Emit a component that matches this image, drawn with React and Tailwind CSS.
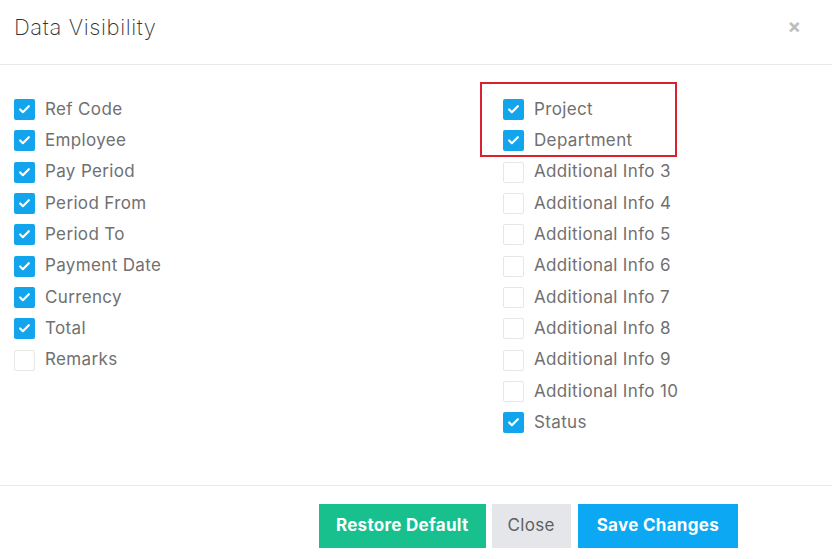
import { Check } from 'lucide-react';

const leftItems = [
    ['Ref Code', true],
    ['Employee', true],
    ['Pay Period', true],
    ['Period From', true],
    ['Period To', true],
    ['Payment Date', true],
    ['Currency', true],
    ['Total', true],
    ['Remarks', false],
];

const rightItems = [
    ['Project', true],
    ['Department', true],
    ['Additional Info 3', false],
    ['Additional Info 4', false],
    ['Additional Info 5', false],
    ['Additional Info 6', false],
    ['Additional Info 7', false],
    ['Additional Info 8', false],
    ['Additional Info 9', false],
    ['Additional Info 10', false],
    ['Status', true],
];

const Row = ({ label, checked }) => (
    <div className="flex items-center h-[31.3px]">
        {checked ? (
            <span className="w-[21px] h-[21px] rounded-[2px] bg-[#12a4ec] flex items-center justify-center">
                <Check className="w-[13px] h-[13px] text-white" strokeWidth={4} />
            </span>
        ) : (
            <span className="w-[21px] h-[21px] rounded-[2px] border border-[#e6e6e6] bg-white" />
        )}
        <span className="ml-[10px] text-[17px] tracking-[0.35px] text-[#707070]">{label}</span>
    </div>
);

export default function App() {
    return (
        <div className="w-[832px] h-[559px] bg-white relative" style={{ fontFamily: 'Inter, "Open Sans", sans-serif' }}>
            <div className="flex items-start justify-between h-[65px] border-b border-[#e9e9e9] pl-[14px] pr-[31px] pt-[13px]">
                <h1 className="text-[22px] font-extralight text-[#333] tracking-[0.6px] leading-[28px]">Data Visibility</h1>
                <span className="text-[#bdbdbd] text-[20px] font-bold leading-none mt-[3px]">×</span>
            </div>

            <div className="flex h-[420px] pt-[29px] pl-[14px]">
                <div className="w-[489px]">
                    {leftItems.map(([l, c]) => <Row key={l} label={l} checked={c} />)}
                </div>
                <div className="relative">
                    {rightItems.map(([l, c]) => <Row key={l} label={l} checked={c} />)}
                    <div className="absolute left-[-23px] top-[-12px] w-[197px] h-[75px] border-2 border-[#d8232f]" />
                </div>
            </div>

            <div className="border-t border-[#e9e9e9] flex justify-end gap-[6px] pt-[18px] pr-[94px]">
                <button className="h-[44px] px-[17px] bg-[#17c08d] text-white font-bold text-[17px] tracking-[0.3px]">Restore Default</button>
                <button className="h-[44px] px-[16px] bg-[#e4e6e9] text-[#5f5f5f] text-[17px] tracking-[0.3px] font-normal">Close</button>
                <button className="h-[44px] px-[19px] bg-[#0ca8f3] text-white font-bold text-[17px] tracking-[0.3px] ml-[1px]">Save Changes</button>
            </div>
        </div>
    );
}
